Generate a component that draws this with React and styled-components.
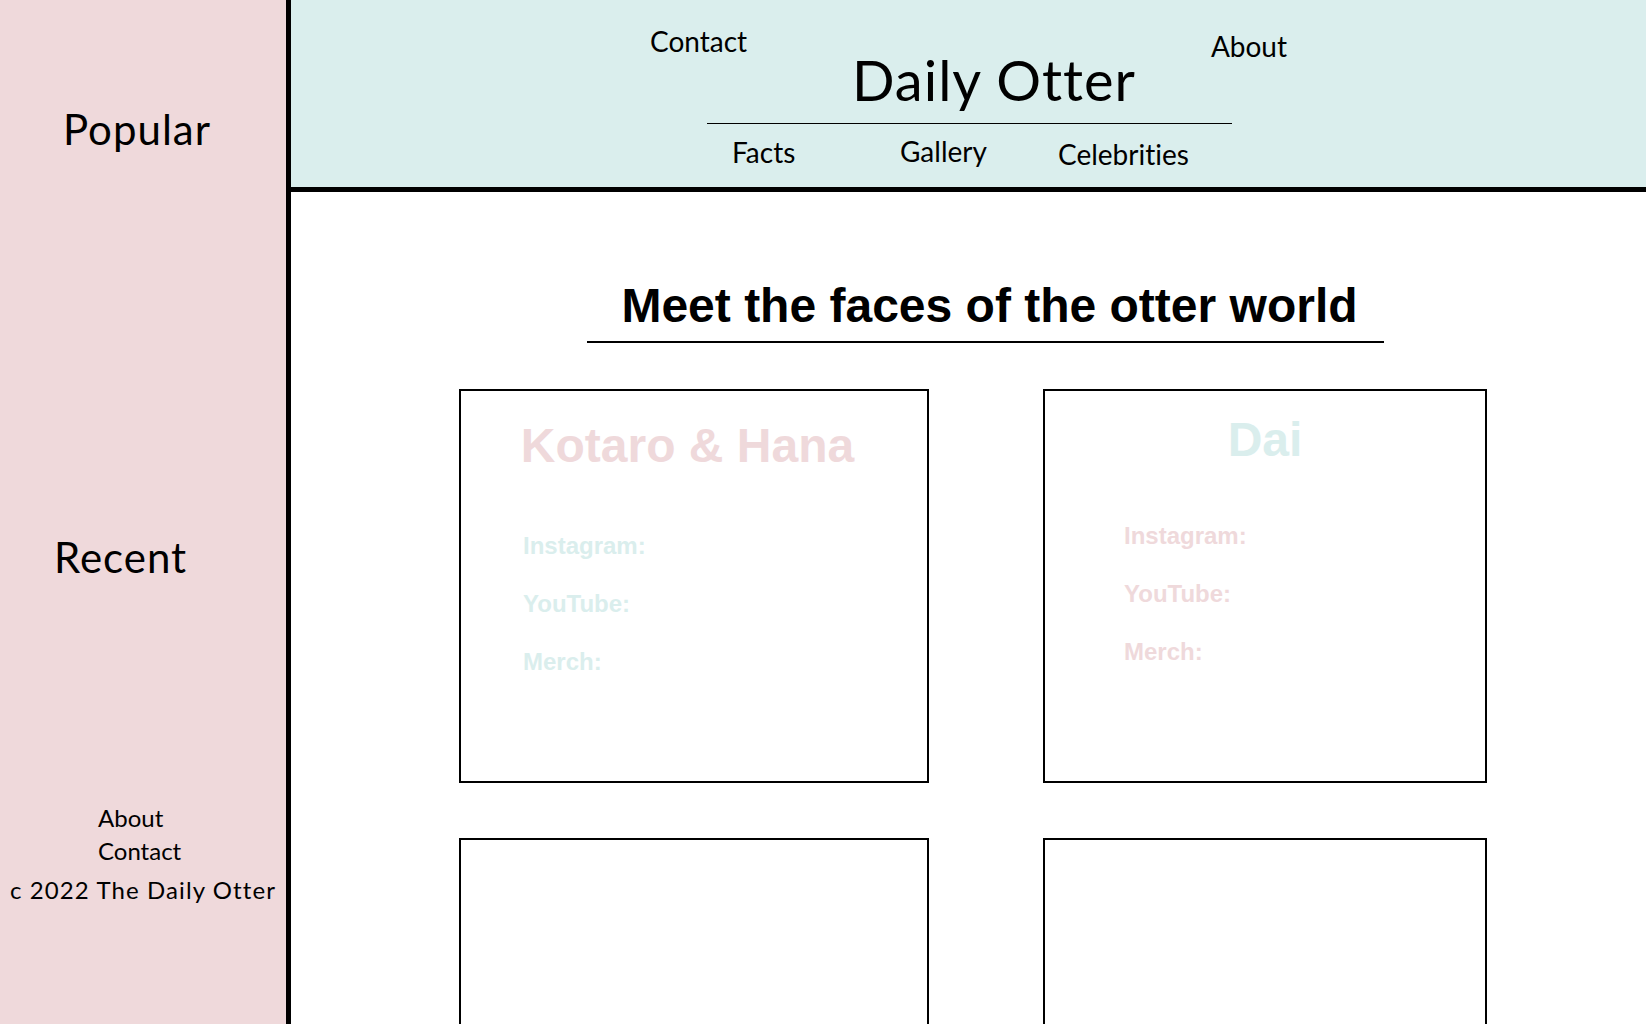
import React from 'react';
import styled, { createGlobalStyle } from 'styled-components';

const pink = '#efd9db';
const teal = '#daeeed';

const GlobalStyle = createGlobalStyle`
  html, body {
    margin: 0;
    padding: 0;
    background: #fff;
  }
  body {
    font-family: Lato, "Open Sans", sans-serif;
    font-variant-ligatures: none;
    color: #000;
    overflow: hidden;
  }
`;

const Layout = styled.div`
  display: flex;
  width: 1646px;
  height: 1024px;
  overflow: hidden;
`;

const Sidebar = styled.aside`
  width: 286px;
  flex-shrink: 0;
  background: ${pink};
  border-right: 5px solid #000;
  display: flex;
  flex-direction: column;
`;

const SideHeading = styled.div`
  font-size: 42px;
  line-height: 1;
  letter-spacing: 1px;
  margin-top: ${props => props.$top}px;
  padding-left: ${props => props.$indent}px;
`;

const FooterLinks = styled.nav`
  display: flex;
  flex-direction: column;
  align-items: flex-start;
  margin-top: 223px;
  padding-left: 98px;
  font-size: 24px;
  line-height: 33px;
`;

const FooterLink = styled.a`
  color: #000;
  text-decoration: none;
`;

const Copyright = styled.div`
  margin-top: 11px;
  font-size: 24px;
  line-height: 1;
  letter-spacing: 1.1px;
  text-align: center;
  white-space: nowrap;
`;

const Main = styled.main`
  flex: 1;
  min-width: 0;
  display: flex;
  flex-direction: column;
`;

const Header = styled.header`
  height: 187px;
  flex-shrink: 0;
  background: ${teal};
  border-bottom: 5px solid #000;
  padding-left: 359px;
  display: flex;
  align-items: flex-start;
`;

const Masthead = styled.div`
  display: grid;
  grid-template-columns: 57px 525px 55px;
  font-size: 28px;
  line-height: 1;
`;

const TopLink = styled.a`
  grid-row: 1;
  grid-column: ${props => props.$col};
  justify-self: ${props => props.$align};
  align-self: start;
  margin-top: ${props => props.$top}px;
  color: #000;
  text-decoration: none;
  white-space: nowrap;
`;

const Title = styled.h1`
  grid-row: 1;
  grid-column: 2;
  margin: 52px 0 0 145px;
  font-size: 56px;
  font-weight: 400;
  line-height: 1;
  letter-spacing: 1px;
  white-space: nowrap;
`;

const Rule = styled.div`
  grid-row: 2;
  grid-column: 2;
  height: 1px;
  margin-top: 15px;
  background: #000;
`;

const NavRow = styled.nav`
  grid-row: 3;
  grid-column: 2;
  display: grid;
  grid-template-columns: 168px 158px auto;
  align-items: start;
  padding-left: 25px;
  margin-top: 13px;
`;

const NavLink = styled.a`
  margin-top: ${props => props.$dy}px;
  color: #000;
  text-decoration: none;
  white-space: nowrap;
`;

const HeadingBlock = styled.div`
  width: 797px;
  box-sizing: border-box;
  margin: 90px 0 0 296px;
  padding: 0 0 11px 8px;
  border-bottom: 2px solid #000;
  text-align: center;
`;

const Heading = styled.h2`
  margin: 0;
  font-family: "Liberation Sans", Arial, sans-serif;
  font-size: 48px;
  font-weight: 700;
  line-height: 1;
  white-space: nowrap;
`;

const CardGrid = styled.div`
  display: grid;
  grid-template-columns: 470px 444px;
  column-gap: 114px;
  row-gap: 55px;
  margin: 46px 0 0 168px;
`;

const Card = styled.article`
  box-sizing: border-box;
  height: 394px;
  border: 2px solid #000;
  padding-top: ${props => props.$pad}px;
  font-family: "Liberation Sans", Arial, sans-serif;
  font-weight: 700;
`;

const CardTitle = styled.h3`
  margin: 0;
  padding-right: ${props => props.$nudge}px;
  font-size: 48px;
  line-height: 1;
  text-align: center;
  color: ${props => props.$color};
  white-space: nowrap;
`;

const LinkList = styled.ul`
  list-style: none;
  margin: ${props => props.$top}px 0 0;
  padding: 0 0 0 ${props => props.$indent}px;
  display: flex;
  flex-direction: column;
  gap: 34px;
`;

const LinkItem = styled.li`
  font-size: 24px;
  line-height: 1;
  color: ${props => props.$color};
`;

const celebrities = [
  { name: 'Kotaro & Hana', title: pink, label: teal, pad: 31, top: 64, indent: 62, nudge: 13 },
  { name: 'Dai', title: teal, label: pink, pad: 25, top: 60, indent: 79, nudge: 0 },
  null,
  null
];

const labels = ['Instagram:', 'YouTube:', 'Merch:'];

export default function App() {
  return (
    <>
      <GlobalStyle />
      <Layout>
        <Sidebar>
          <SideHeading $top={108} $indent={63}>Popular</SideHeading>
          <SideHeading $top={386} $indent={54}>Recent</SideHeading>
          <FooterLinks>
            <FooterLink href="#">About</FooterLink>
            <FooterLink href="#">Contact</FooterLink>
          </FooterLinks>
          <Copyright>c 2022 The Daily Otter</Copyright>
        </Sidebar>

        <Main>
          <Header>
            <Masthead>
              <TopLink href="#" $col="1 / 3" $align="start" $top={27}>Contact</TopLink>
              <Title>Daily Otter</Title>
              <TopLink href="#" $col="2 / 4" $align="end" $top={32}>About</TopLink>
              <Rule />
              <NavRow>
                <NavLink href="#" $dy={1}>Facts</NavLink>
                <NavLink href="#" $dy={0}>Gallery</NavLink>
                <NavLink href="#" $dy={3}>Celebrities</NavLink>
              </NavRow>
            </Masthead>
          </Header>

          <HeadingBlock>
            <Heading>Meet the faces of the otter world</Heading>
          </HeadingBlock>

          <CardGrid>
            {celebrities.map((c, i) => (
              <Card key={i} $pad={c ? c.pad : 0}>
                {c && (
                  <>
                    <CardTitle $color={c.title} $nudge={c.nudge}>{c.name}</CardTitle>
                    <LinkList $top={c.top} $indent={c.indent}>
                      {labels.map(l => (
                        <LinkItem key={l} $color={c.label}>{l}</LinkItem>
                      ))}
                    </LinkList>
                  </>
                )}
              </Card>
            ))}
          </CardGrid>
        </Main>
      </Layout>
    </>
  );
}
